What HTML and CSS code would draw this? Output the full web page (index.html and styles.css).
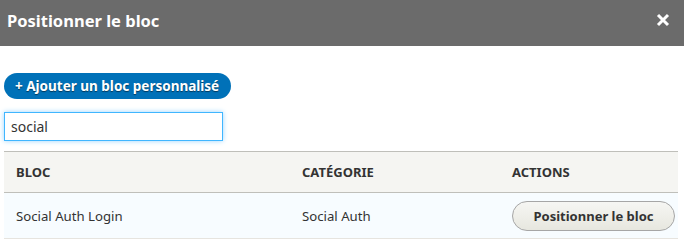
FILE: index.html
```html
<!DOCTYPE html>
<html>
<head>
<meta charset="utf-8">
<link rel="stylesheet" href="styles.css">
</head>
<body>
<div class="dialog">
	<div class="titlebar">
		<span class="title">Positionner le bloc</span>
		<svg class="close" width="14" height="14" viewBox="0 0 14 14">
			<path d="M2 2 L12 12 M12 2 L2 12" stroke="#fff" stroke-width="3"/>
		</svg>
	</div>

	<div class="content">
		<a class="button-add" href="#">+ Ajouter un bloc personnalisé</a>

		<div class="filter">
			<input type="text" class="search" value="social">
		</div>

		<table class="blocks">
			<thead>
				<tr>
					<th class="col-bloc">Bloc</th>
					<th class="col-cat">Catégorie</th>
					<th class="col-actions">Actions</th>
				</tr>
			</thead>
			<tbody>
				<tr>
					<td>Social Auth Login</td>
					<td>Social Auth</td>
					<td><a class="button" href="#">Positionner le bloc</a></td>
				</tr>
			</tbody>
		</table>
	</div>
</div>
</body>
</html>
```

FILE: styles.css
```css
body {
	margin: 0;
	font-family: "Noto Sans", "Open Sans", sans-serif;
	color: #333;
	background: #fff;
}

.titlebar {
	background: #6b6b6b;
	height: 46px;
	display: flex;
	align-items: center;
	justify-content: space-between;
	padding: 0 14px 0 7px;
}
.title {
	color: #fff;
	font-weight: bold;
	font-size: 16.5px;
	margin-top: -6px;
}
.close {
	margin-top: -6px;
}

.content {
	padding: 27px 6px 0 4px;
}

.button-add {
	display: inline-block;
	background: #0071b8;
	color: #fff;
	text-decoration: none;
	font-weight: bold;
	font-size: 13.5px;
	line-height: 26px;
	height: 26px;
	padding: 0 12px 0 11px;
	border-radius: 14px;
	text-shadow: 0 1px 1px rgba(0, 0, 0, .5);
}

.filter {
	margin-top: 13px;
}
.search {
	width: 219px;
	height: 29px;
	box-sizing: border-box;
	border: 1px solid #40b6ff;
	box-shadow: 0 0 5px #9bd6ff;
	padding: 0 6px;
	font-family: inherit;
	font-size: 14px;
	color: #333;
	outline: none;
}

.blocks {
	margin-top: 10px;
	width: 674px;
	border-collapse: collapse;
	font-size: 13px;
}
.blocks th {
	background: #f5f5f2;
	border-top: 1px solid #bfbfba;
	border-bottom: 1px solid #bfbfba;
	text-align: left;
	text-transform: uppercase;
	font-weight: bold;
	font-size: 13px;
	height: 40px;
	padding: 0 12px;
}
.col-bloc { width: 262px; }
.col-cat { width: 186px; }

.blocks td {
	background: #f7fcff;
	border-bottom: 1px solid #e6e4df;
	height: 45px;
	padding: 0 12px;
	font-size: 13.2px;
}
.blocks td:last-child {
	padding: 0 3px 0 12px;
}

.button {
	display: inline-block;
	box-sizing: border-box;
	width: 163px;
	height: 30px;
	line-height: 28px;
	text-align: center;
	border: 1px solid #a6a6a6;
	border-radius: 15px;
	background: linear-gradient(#f6f6f3, #e7e7df);
	color: #333;
	text-decoration: none;
	font-weight: bold;
	font-size: 13px;
}
```
